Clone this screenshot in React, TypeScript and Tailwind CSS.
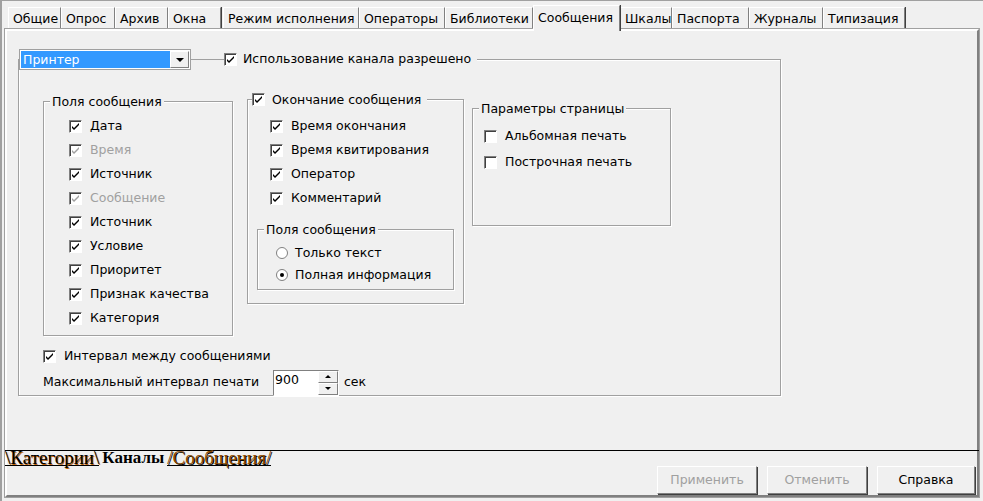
import React from "react";

const F = { fontFamily: '"DejaVu Sans", Tahoma, sans-serif' };

function Check({ on = true, dis = false }: { on?: boolean; dis?: boolean }) {
  return (
    <span className="inline-flex w-[13px] h-[13px] shrink-0 bg-white border border-t-[#808080] border-l-[#808080] border-b-white border-r-white shadow-[inset_1px_1px_0_#404040] items-center justify-center">
      {on && (
        <svg width="9" height="9" viewBox="0 0 9 9">
          <path d="M1 4 L3 6 L8 1 L8 3 L3 8 L1 6 Z" fill={dis ? "#a0a0a0" : "#000"} />
        </svg>
      )}
    </span>
  );
}

function Radio({ on = false }: { on?: boolean }) {
  return (
    <span className="inline-flex w-[12px] h-[12px] shrink-0 rounded-full bg-white border border-[#808080] items-center justify-center">
      {on && <span className="w-[4px] h-[4px] rounded-full bg-black" />}
    </span>
  );
}

function Row({ label, on = true, dis = false, h = 24 }: { label: string; on?: boolean; dis?: boolean; h?: number }) {
  return (
    <div className="flex items-center gap-[8px]" style={{ height: h }}>
      <Check on={on} dis={dis} />
      <span className={dis ? "text-[#a0a0a0]" : "text-black"}>{label}</span>
    </div>
  );
}

const groupCls = "relative border border-[#a0a0a0] shadow-[1px_1px_0_#fff,inset_1px_1px_0_#fff]";

const tabs = ["Общие", "Опрос", "Архив", "Окна", "Режим исполнения", "Операторы", "Библиотеки", "Сообщения", "Шкалы", "Паспорта", "Журналы", "Типизация"];
const widths = [53, 54, 53, 53, 136, 86, 88, 87, 52, 77, 74, 82];

export default function App() {
  return (
    <div style={F} className="w-[983px] h-[501px] bg-[#f0f0f0] text-[12.5px] text-black border-l-2 border-[#a0a0a0] overflow-hidden relative">
      <div className="flex h-[29px] pl-[6px] pt-[5px] items-end border-t border-[#a0a0a0]">
        {tabs.map((t, i) => {
          const active = t === "Сообщения";
          return (
            <div
              key={t}
              style={{ width: widths[i] }}
              className={
                "shrink-0 px-[4px] whitespace-nowrap overflow-hidden border-l border-t border-white border-r border-r-[#808080] shadow-[1px_0_0_#404040] " +
                (active ? "h-[26px] pt-[3px] bg-[#f0f0f0] relative z-10 -mb-[2px]" : "h-[22px] pt-[2px] " + (i === 4 ? "ml-[2px]" : ""))
              }
            >
              {t}
            </div>
          );
        })}
      </div>
      <div className="ml-[3px] mr-[4px] h-[468px] border-t-2 border-l-2 border-white border-r-2 border-r-[#808080] border-b-2 border-b-[#808080] outline outline-1 outline-[#a0a0a0] relative flex flex-col">
        <div className="pl-[11px] pt-[28px]">
          <div className={groupCls + " w-[763px] h-[337px] pl-[24px] pt-[41px]"}>
            <div className="absolute -top-[11px] left-0 flex items-center bg-[#f0f0f0]">
              <div className="flex w-[172px] h-[21px] border border-[#a0a0a0] bg-white p-[1px]">
                <div className="flex-1 bg-[#3399ff] text-white pl-[2px] leading-[17px]">Принтер</div>
                <div className="w-[19px] bg-[#f0f0f0] border border-white border-r-[#808080] border-b-[#808080] flex items-center justify-center">
                  <svg width="8" height="4" viewBox="0 0 8 4"><path d="M0 0H8L4 4Z" fill="#000" /></svg>
                </div>
              </div>
              <div className="w-[33px] h-px bg-[#a0a0a0]" />
              <div className="flex items-center gap-[6px] pr-[6px]">
                <Check />
                <span>Использование канала разрешено</span>
              </div>
            </div>
            <div className="flex items-start">
              <div className={groupCls + " w-[190px] h-[235px] pl-[25px] pt-[12px]"}>
                <span className="absolute -top-[8px] left-[6px] bg-[#f0f0f0] px-[2px] leading-[15px]">Поля сообщения</span>
                <Row label="Дата" />
                <Row label="Время" dis />
                <Row label="Источник" />
                <Row label="Сообщение" dis />
                <Row label="Источник" />
                <Row label="Условие" />
                <Row label="Приоритет" />
                <Row label="Признак качества" />
                <Row label="Категория" />
              </div>
              <div className={groupCls + " ml-[14px] -mt-[2px] w-[217px] h-[205px] pl-[22px] pt-[14px]"}>
                <div className="absolute -top-[8px] left-[4px] bg-[#f0f0f0] pr-[6px] flex items-center gap-[7px] leading-[15px]">
                  <Check />
                  <span>Окончание сообщения</span>
                </div>
                <Row label="Время окончания" />
                <Row label="Время квитирования" />
                <Row label="Оператор" />
                <Row label="Комментарий" />
                <div className={groupCls + " -ml-[13px] mt-[19px] w-[197px] h-[61px] pl-[18px] pt-[12px]"}>
                  <span className="absolute -top-[8px] left-[6px] bg-[#f0f0f0] px-[2px] leading-[15px]">Поля сообщения</span>
                  <div className="flex items-center gap-[7px] h-[22px]"><Radio /><span>Только текст</span></div>
                  <div className="flex items-center gap-[7px] h-[22px]"><Radio on /><span>Полная информация</span></div>
                </div>
              </div>
              <div className={groupCls + " ml-[8px] mt-[7px] w-[199px] h-[118px] pl-[11px] pt-[14px]"}>
                <span className="absolute -top-[8px] left-[6px] bg-[#f0f0f0] px-[2px] leading-[15px]">Параметры страницы</span>
                <Row label="Альбомная печать" on={false} h={26} />
                <Row label="Построчная печать" on={false} h={26} />
              </div>
            </div>
            <div className="mt-[9px]">
              <Row label="Интервал между сообщениями" h={22} />
            </div>
            <div className="flex items-center h-[27px] mt-[2px]">
              <span className="w-[230px]">Максимальный интервал печати</span>
              <div className="flex h-[26px] w-[66px] border border-t-[#808080] border-l-[#808080] border-b-white border-r-white bg-white">
                <span className="flex-1 pl-[1px] leading-[18px]">900</span>
                <div className="w-[20px] flex flex-col bg-[#f0f0f0]">
                  <div className="flex-1 border border-white border-r-[#808080] border-b-[#808080] flex items-center justify-center">
                    <svg width="6" height="3" viewBox="0 0 6 3"><path d="M0 3H6L3 0Z" fill="#000" /></svg>
                  </div>
                  <div className="flex-1 border border-white border-r-[#808080] border-b-[#808080] flex items-center justify-center">
                    <svg width="6" height="3" viewBox="0 0 6 3"><path d="M0 0H6L3 3Z" fill="#000" /></svg>
                  </div>
                </div>
              </div>
              <span className="ml-[5px]">сек</span>
            </div>
          </div>
        </div>
        <div className="mt-auto">
          <div className="h-px bg-black mr-[-2px] ml-[-2px]" />
          <div className="flex items-start -ml-[2px] text-[19px] leading-[14px] h-[14px] overflow-visible" style={{ fontFamily: '"Liberation Serif", "Times New Roman", serif' }}>
            <span className="border-b border-black" style={{ textShadow: "1px 1px 0 #c06000" }}>\Категории\</span>
            <span className="px-[3px] font-bold text-[17px]">Каналы</span>
            <span className="border-b border-black text-[#8a4a00]" style={{ textShadow: "1px 1px 0 #000" }}>/Сообщения/</span>
          </div>
          <div className="flex justify-end gap-[10px] pr-[2px] pt-[1px] pb-[1px]">
            {["Применить", "Отменить", "Справка"].map((b, i) => (
              <div
                key={b}
                className={
                  "h-[28px] flex items-center justify-center border border-t-white border-l-white border-b-[#808080] border-r-[#808080] shadow-[1px_1px_0_#404040] " +
                  (i === 2 ? "w-[98px] text-black" : "w-[100px] text-[#a0a0a0]")
                }
              >
                {b}
              </div>
            ))}
          </div>
        </div>
      </div>
    </div>
  );
}
